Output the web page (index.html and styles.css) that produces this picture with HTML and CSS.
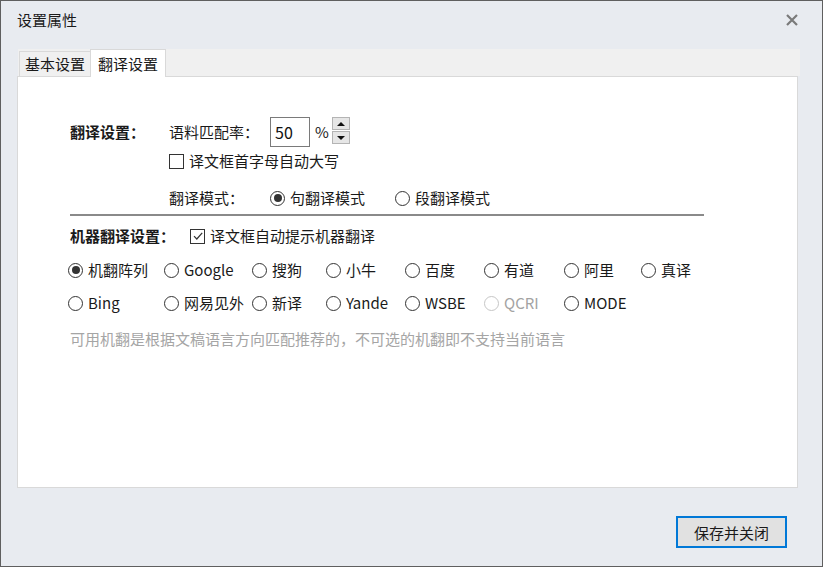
FILE: index.html
```html
<!DOCTYPE html>
<html lang="zh-CN">
<head>
    <meta charset="UTF-8">
    <title>设置属性</title>
    <link rel="stylesheet" href="styles.css">
</head>
<body>
    <div class="ventana">
        <div class="barra-titulo">
            <span class="titulo">设置属性</span>
            <svg class="cerrar" width="12" height="12" viewBox="0 0 12 12">
                <path d="M1 1 L11 11 M11 1 L1 11" stroke="#7a7a7a" stroke-width="2.2" fill="none"/>
            </svg>
        </div>

        <div class="pestanas">
            <div class="pestana">基本设置</div>
            <div class="pestana activa">翻译设置</div>
        </div>

        <div class="panel">
            <!-- 翻译设置 -->
            <div class="fila fila-a">
                <div class="grupo">翻译设置：</div>
                <div class="etiqueta">语料匹配率：</div>
                <input class="numero" type="text" value="50" readonly>
                <span class="unidad">%</span>
                <div class="spinner">
                    <span class="spin"><i class="tri arriba"></i></span>
                    <span class="spin"><i class="tri abajo"></i></span>
                </div>
            </div>

            <div class="fila fila-b sangria">
                <label class="check"><span class="caja"></span>译文框首字母自动大写</label>
            </div>

            <div class="fila fila-c sangria">
                <div class="etiqueta">翻译模式：</div>
                <label class="radio marcado modo"><span class="circulo"></span>句翻译模式</label>
                <label class="radio"><span class="circulo"></span>段翻译模式</label>
            </div>

            <hr class="separador">

            <!-- 机器翻译设置 -->
            <div class="fila fila-d">
                <div class="grupo ancho">机器翻译设置：</div>
                <label class="check marcado">
                    <span class="caja">
                        <svg width="12" height="12" viewBox="0 0 12 12"><path d="M2 6.2 L4.8 9 L10.2 2.8" stroke="#333" stroke-width="1.2" fill="none"/></svg>
                    </span>译文框自动提示机器翻译
                </label>
            </div>

            <div class="motores">
                <label class="radio marcado"><span class="circulo"></span>机翻阵列</label>
                <label class="radio"><span class="circulo"></span>Google</label>
                <label class="radio"><span class="circulo"></span>搜狗</label>
                <label class="radio"><span class="circulo"></span>小牛</label>
                <label class="radio"><span class="circulo"></span>百度</label>
                <label class="radio"><span class="circulo"></span>有道</label>
                <label class="radio"><span class="circulo"></span>阿里</label>
                <label class="radio"><span class="circulo"></span>真译</label>

                <label class="radio"><span class="circulo"></span>Bing</label>
                <label class="radio"><span class="circulo"></span>网易见外</label>
                <label class="radio"><span class="circulo"></span>新译</label>
                <label class="radio"><span class="circulo"></span>Yande</label>
                <label class="radio"><span class="circulo"></span>WSBE</label>
                <label class="radio desactivado"><span class="circulo"></span>QCRI</label>
                <label class="radio"><span class="circulo"></span>MODE</label>
            </div>

            <p class="nota">可用机翻是根据文稿语言方向匹配推荐的，不可选的机翻即不支持当前语言</p>
        </div>

        <div class="pie">
            <button class="boton-guardar">保存并关闭</button>
        </div>
    </div>
</body>
</html>
```

FILE: styles.css
```css
body {
    margin: 0;
    font-family: "Noto Sans CJK SC", "Noto Sans", sans-serif;
    font-size: 15px;
    color: #1a1a1a;
}

.ventana {
    width: 823px;
    height: 567px;
    box-sizing: border-box;
    border: 1px solid #5f5f5f;
    background: #e8ebf0;
}

.barra-titulo {
    height: 38px;
    padding: 0 24px 0 16px;
    display: flex;
    align-items: center;
    justify-content: space-between;
}

.titulo {
    line-height: 20px;
}

/* pestañas */
.pestanas {
    margin: 10px 0 0 17px;
    width: 782px;
    height: 27px;
    background: #f0f0f0;
    display: flex;
    align-items: flex-end;
}

.pestana {
    height: 25px;
    line-height: 24px;
    padding: 0 5px;
    margin-left: 1px;
    border: 1px solid #d9d9d9;
    border-bottom: none;
    border-right: none;
    background: #f0f0f0;
    box-sizing: border-box;
}

.pestana.activa {
    height: 28px;
    line-height: 27px;
    margin: 0 0 -1px 0;
    padding: 0 7px;
    border-right: 1px solid #d9d9d9;
    background: #fff;
    position: relative;
    z-index: 1;
}

.panel {
    margin-left: 16px;
    width: 781px;
    height: 412px;
    box-sizing: border-box;
    border: 1px solid #d9d9d9;
    background: #fff;
    padding: 40px 0 0 52px;
}

/* filas */
.fila {
    display: flex;
    align-items: center;
    line-height: 20px;
}

.fila-a { height: 30px; }
.fila-b { height: 20px; margin-top: 4px; }
.fila-c { height: 20px; margin-top: 17px; }
.fila-d { height: 20px; margin-top: 10px; }

.sangria {
    padding-left: 99px;
}

.grupo {
    width: 99px;
    font-weight: bold;
}

.grupo.ancho {
    width: 120px;
}

.etiqueta {
    width: 101px;
}

.numero {
    width: 40px;
    height: 30px;
    box-sizing: border-box;
    border: 1px solid #7a7a7a;
    padding: 0 0 0 4px;
    font-family: inherit;
    font-size: 16px;
    color: #111;
    outline: none;
}

.unidad {
    width: 17px;
    margin-left: 5px;
}

.spinner {
    display: flex;
    flex-direction: column;
    gap: 1px;
    align-self: flex-start;
}

.spin {
    width: 18px;
    height: 13px;
    box-sizing: border-box;
    border: 1px solid #b4b4b4;
    background: #e6e6e6;
    display: flex;
    align-items: center;
    justify-content: center;
}

.tri {
    width: 0;
    height: 0;
    border-left: 4px solid transparent;
    border-right: 4px solid transparent;
}

.tri.arriba { border-bottom: 4px solid #111; }
.tri.abajo { border-top: 4px solid #111; }

/* controles */
.check, .radio {
    display: flex;
    align-items: center;
    white-space: nowrap;
}

.caja {
    width: 15px;
    height: 15px;
    box-sizing: border-box;
    border: 1px solid #333;
    margin-right: 5px;
    display: flex;
    align-items: center;
    justify-content: center;
}

.circulo {
    width: 15px;
    height: 15px;
    box-sizing: border-box;
    border: 1px solid #333;
    border-radius: 50%;
    margin-right: 5px;
    flex-shrink: 0;
    display: flex;
    align-items: center;
    justify-content: center;
}

.radio.marcado .circulo::after {
    content: "";
    width: 8px;
    height: 8px;
    border-radius: 50%;
    background: #333;
}

.radio.modo {
    width: 125px;
}

.radio.desactivado {
    color: #a3a3a3;
}

.radio.desactivado .circulo {
    border-color: #c6c6c6;
}

.separador {
    width: 634px;
    margin: 6px 0 0 0;
    border: none;
    height: 2px;
    background: #8a8a8a;
}

.motores {
    display: grid;
    grid-template-columns: 96px 88px 74px 79px 79px 80px 77px 1fr;
    grid-auto-rows: 20px;
    row-gap: 13px;
    margin: 14px 0 0 -2px;
    line-height: 20px;
}

.motores .radio {
    overflow: hidden;
}

.nota {
    margin: 16px 0 0 0;
    line-height: 20px;
    color: #a5a5a5;
}

/* pie */
.pie {
    display: flex;
    justify-content: flex-end;
    padding: 28px 35px 0 0;
}

.boton-guardar {
    width: 111px;
    height: 32px;
    border: 2px solid #0078d7;
    background: #e1e1e1;
    font-family: inherit;
    font-size: 15px;
    color: #1a1a1a;
    padding: 0;
}
```
